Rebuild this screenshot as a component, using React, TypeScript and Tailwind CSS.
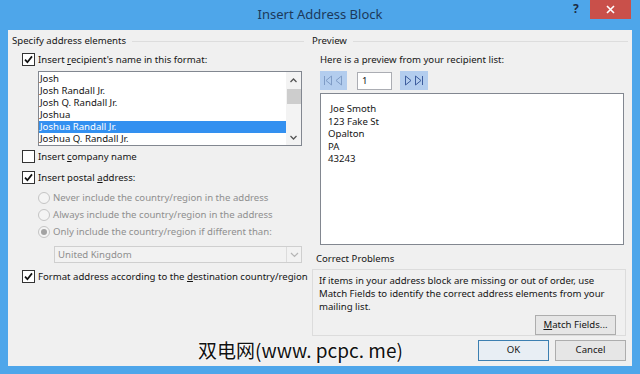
import React from 'react'

const NAMES = ['Josh', 'Josh Randall Jr.', 'Josh Q. Randall Jr.', 'Joshua', 'Joshua Randall Jr.', 'Joshua Q. Randall Jr.']
const ADDRESS = ['\u00a0Joe Smoth', '123 Fake St', 'Opalton', 'PA', '43243']

function Check({ checked }: { checked: boolean }) {
  return (
    <span className="w-[13px] h-[13px] border border-[#333] bg-white flex items-center justify-center shrink-0">
      {checked && (
        <svg width="9" height="9" viewBox="0 0 9 9">
          <path d="M1 4.6 L3.4 7.2 L8 1.4" stroke="#111" strokeWidth="1.7" fill="none" />
        </svg>
      )}
    </span>
  )
}

function Radio({ selected }: { selected?: boolean }) {
  return (
    <span className="w-[12px] h-[12px] rounded-full border border-[#c4c4c4] bg-[#f4f4f4] flex items-center justify-center shrink-0">
      {selected && <span className="w-[6px] h-[6px] rounded-full bg-[#a3a3a3]" />}
    </span>
  )
}

function GroupTitle({ children }: { children: React.ReactNode }) {
  return (
    <div className="h-[12px] flex items-center">
      <span>{children}</span>
      <div className="flex-1 h-px bg-[#dddddd] ml-[6px]" />
    </div>
  )
}

export default function App() {
  return (
    <div className="w-[640px] h-[374px] bg-[#4ea6ea] flex flex-col font-['Noto_Sans',sans-serif] text-[9.6px] leading-[12px] text-[#151515] overflow-hidden">
      {/* Title bar */}
      <div className="h-[30px] relative flex items-center justify-center">
        <span className="text-[13px] text-[#1c395b] -mt-[2px]">Insert Address Block</span>
        <span className="absolute left-[573px] top-[3px] text-[12px] font-bold text-[#1c2c44]">?</span>
        <div className="absolute left-[590px] top-0 w-[41px] h-[19px] bg-[#c9504a] flex items-center justify-center">
          <svg width="9" height="9" viewBox="0 0 9 9">
            <path d="M1 1 L8 8 M8 1 L1 8" stroke="#fff" strokeWidth="1.6" />
          </svg>
        </div>
      </div>

      {/* Client area */}
      <div className="mx-[8px] h-[336px] bg-[#f0f0f0] flex flex-col">
        <div className="pt-[5px] px-[4px] grid grid-cols-[292px_1fr] gap-x-[8px]">
          {/* Left column */}
          <div className="flex flex-col">
            <GroupTitle>Specify address elements</GroupTitle>
            <div className="mt-[6px] pl-[10px] h-[13px] flex items-center gap-[3px]">
              <Check checked />
              <span>Insert <span className="underline underline-offset-[1px]">r</span>ecipient's name in this format:</span>
            </div>
            <div className="mt-[5px] ml-[26px] w-[264px] h-[75px] border border-[#828790] bg-white flex">
              <div className="flex-1 pt-[1px]">
                {NAMES.map((n, i) => (
                  <div key={i} className={`h-[12px] leading-[12px] pl-[1px] ${i === 4 ? 'bg-[#3390f0] text-white' : ''}`}>{n}</div>
                ))}
              </div>
              <div className="w-[15px] bg-[#f3f3f3] flex flex-col items-center">
                <svg width="15" height="16" viewBox="0 0 15 16" className="mt-[1px]">
                  <path d="M4.5 9 L7.5 6 L10.5 9" stroke="#555" strokeWidth="1.3" fill="none" />
                </svg>
                <div className="w-[14px] h-[15px] bg-[#cdcdcd]" />
                <div className="flex-1" />
                <svg width="15" height="14" viewBox="0 0 15 14">
                  <path d="M4.5 5 L7.5 8 L10.5 5" stroke="#555" strokeWidth="1.3" fill="none" />
                </svg>
              </div>
            </div>
            <div className="mt-[4px] pl-[10px] h-[13px] flex items-center gap-[3px]">
              <Check checked={false} />
              <span>Insert <span className="underline underline-offset-[1px]">c</span>ompany name</span>
            </div>
            <div className="mt-[8px] pl-[10px] h-[13px] flex items-center gap-[3px]">
              <Check checked />
              <span>Insert postal <span className="underline underline-offset-[1px]">a</span>ddress:</span>
            </div>
            <div className="mt-[7px] pl-[26px] h-[13px] flex items-center gap-[3px] text-[#8f8f8f]">
              <Radio />
              <span>Never include the country/region in the address</span>
            </div>
            <div className="mt-[4px] pl-[26px] h-[13px] flex items-center gap-[3px] text-[#8f8f8f]">
              <Radio />
              <span>Always include the country/region in the address</span>
            </div>
            <div className="mt-[4px] pl-[26px] h-[13px] flex items-center gap-[3px] text-[#8f8f8f]">
              <Radio selected />
              <span>Only include the country/region if different than:</span>
            </div>
            <div className="mt-[8px] ml-[42px] w-[248px] h-[17px] border border-[#cfcfcf] bg-[#f2f2f2] flex items-center text-[#8f8f8f]">
              <span className="flex-1 pl-[3px]">United Kingdom</span>
              <div className="w-[15px] h-[15px] border-l border-[#dcdcdc] flex items-center justify-center">
                <svg width="9" height="6" viewBox="0 0 9 6">
                  <path d="M1 1 L4.5 4.5 L8 1" stroke="#b5b5b5" strokeWidth="1.2" fill="none" />
                </svg>
              </div>
            </div>
            <div className="mt-[7px] pl-[10px] h-[13px] flex items-center gap-[3px] whitespace-nowrap">
              <Check checked />
              <span>Format address according to the <span className="underline underline-offset-[1px]">d</span>estination country/region</span>
            </div>
          </div>

          {/* Right column */}
          <div className="flex flex-col">
            <GroupTitle>Preview</GroupTitle>
            <div className="mt-[6px] pl-[8px] h-[13px] flex items-center">Here is a preview from your recipient list:</div>
            <div className="mt-[5px] pl-[8px] h-[19px] flex items-center">
              <div className="w-[27px] h-[19px] bg-[#b3cdee] flex items-center justify-center">
                <svg width="27" height="19" viewBox="0 0 27 19">
                  <path d="M4.5 5 V14" stroke="#7f9cc6" strokeWidth="1" />
                  <path d="M11.5 5 L6 9.5 L11.5 14 Z" stroke="#7f9cc6" strokeWidth="1" fill="none" />
                  <path d="M21.5 5 L16 9.5 L21.5 14 Z" stroke="#7f9cc6" strokeWidth="1" fill="none" />
                </svg>
              </div>
              <div className="ml-[10px] w-[35px] h-[18px] border border-[#abadb3] bg-white flex items-center pl-[4px]">1</div>
              <div className="ml-[8px] w-[28px] h-[19px] bg-[#b3cdee] flex items-center justify-center">
                <svg width="28" height="19" viewBox="0 0 28 19">
                  <path d="M5.5 5 L11 9.5 L5.5 14 Z" stroke="#3d5d9e" strokeWidth="1" fill="none" />
                  <path d="M15.5 5 L21 9.5 L15.5 14 Z" stroke="#3d5d9e" strokeWidth="1" fill="none" />
                  <path d="M22.5 5 V14" stroke="#3d5d9e" strokeWidth="1" />
                </svg>
              </div>
            </div>
            <div className="mt-[3px] ml-[8px] mr-[4px] h-[152px] border border-[#828790] bg-white pt-[9px] pl-[7px] leading-[12.5px]">
              {ADDRESS.map((l, i) => (
                <div key={i}>{l}</div>
              ))}
            </div>
            <div className="mt-[8px] pl-[4px] h-[12px]">Correct Problems</div>
            <div className="mt-[4px] mr-[2px] h-[67px] border border-[#dcdcdc] flex flex-col">
              <p className="pl-[6px] pt-[4px] leading-[13px]">
                If items in your address block are missing or out of order, use<br />
                Match Fields to identify the correct address elements from your<br />
                mailing list.
              </p>
              <div className="mt-[2px] flex justify-end pr-[9px]">
                <div className="w-[81px] h-[20px] border border-[#adadad] bg-[#e6e6e6] flex items-center justify-center">
                  <span><span className="underline underline-offset-[1px]">M</span>atch Fields...</span>
                </div>
              </div>
            </div>
          </div>
        </div>

        {/* Bottom row */}
        <div className="mt-auto mb-[5px] flex items-center pr-[6px]">
          <span className="ml-[190px] text-[19px] leading-[22px] text-[#111] font-['Noto_Sans_CJK_SC',sans-serif] [text-shadow:0_0_2px_#fff,0_0_2px_#fff]">双电网(www. pcpc. me)</span>
          <div className="ml-auto w-[71px] h-[21px] border border-[#3c7fb1] bg-[#e8eef4] flex items-center justify-center">OK</div>
          <div className="ml-[6px] w-[71px] h-[21px] border border-[#adadad] bg-[#e6e6e6] flex items-center justify-center">Cancel</div>
        </div>
      </div>
    </div>
  )
}
